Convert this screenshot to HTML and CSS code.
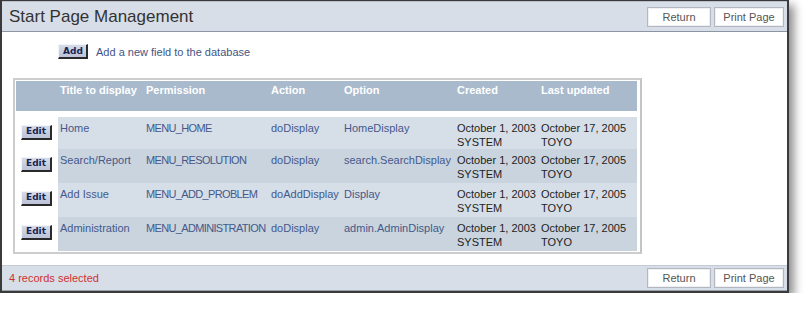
FILE: index.html
```html
<!DOCTYPE html>
<html>
<head>
  <meta charset="utf-8">
  <link rel="stylesheet" href="styles.css">
</head>
<body>
  <div class="window">
    <div class="bar header">
      <div class="title">Start Page Management</div>
      <div class="bar-actions">
        <button class="plain-btn">Return</button>
        <button class="plain-btn print">Print Page</button>
      </div>
    </div>

    <div class="content">
      <div class="add-row">
        <button class="mini-btn add">Add</button>
        <span class="add-text">Add a new field to the database</span>
      </div>

      <div class="frame">
        <table class="grid">
          <colgroup>
            <col style="width: 42px">
            <col style="width: 86px">
            <col style="width: 125px">
            <col style="width: 73px">
            <col style="width: 113px">
            <col style="width: 84px">
            <col>
          </colgroup>
          <thead>
            <tr>
              <th></th>
              <th>Title to display</th>
              <th>Permission</th>
              <th>Action</th>
              <th>Option</th>
              <th>Created</th>
              <th>Last updated</th>
            </tr>
          </thead>
          <tbody>
            <tr class="light">
              <td class="edit-cell"><button class="mini-btn">Edit</button></td>
              <td class="link">Home</td>
              <td class="link caps">MENU_HOME</td>
              <td class="link">doDisplay</td>
              <td class="link">HomeDisplay</td>
              <td>October 1, 2003<br>SYSTEM</td>
              <td>October 17, 2005<br>TOYO</td>
            </tr>
            <tr class="dark">
              <td class="edit-cell"><button class="mini-btn">Edit</button></td>
              <td class="link">Search/Report</td>
              <td class="link caps">MENU_RESOLUTION</td>
              <td class="link">doDisplay</td>
              <td class="link">search.SearchDisplay</td>
              <td>October 1, 2003<br>SYSTEM</td>
              <td>October 17, 2005<br>TOYO</td>
            </tr>
            <tr class="light">
              <td class="edit-cell"><button class="mini-btn">Edit</button></td>
              <td class="link">Add Issue</td>
              <td class="link caps">MENU_ADD_PROBLEM</td>
              <td class="link">doAddDisplay</td>
              <td class="link">Display</td>
              <td>October 1, 2003<br>SYSTEM</td>
              <td>October 17, 2005<br>TOYO</td>
            </tr>
            <tr class="dark">
              <td class="edit-cell"><button class="mini-btn">Edit</button></td>
              <td class="link">Administration</td>
              <td class="link caps">MENU_ADMINISTRATION</td>
              <td class="link">doDisplay</td>
              <td class="link">admin.AdminDisplay</td>
              <td>October 1, 2003<br>SYSTEM</td>
              <td>October 17, 2005<br>TOYO</td>
            </tr>
          </tbody>
        </table>
      </div>
    </div>

    <div class="bar footer">
      <div class="records">4 records selected</div>
      <div class="bar-actions">
        <button class="plain-btn">Return</button>
        <button class="plain-btn print">Print Page</button>
      </div>
    </div>
  </div>
</body>
</html>
```

FILE: styles.css
```css
body {
  margin: 0;
  background: #fff;
  font-family: 'Liberation Sans', Arial, sans-serif;
  font-size: 11px;
}

.window {
  width: 785px;
  border: 2px solid #3a3a3a;
  border-top-width: 1px;
  background: #fff;
  box-shadow: 5px 5px 9px rgba(0, 0, 0, 0.45);
}

.bar {
  display: flex;
  align-items: center;
  justify-content: space-between;
  background: #d7dee8;
  padding: 0 3px 0 7px;
}

.header {
  height: 29px;
  border-top: 1px solid #b8c0cc;
  border-bottom: 1px solid #8b95a3;
}

.footer {
  height: 24px;
  border-top: 1px solid #c3cbd6;
  border-bottom: 1px solid #9aa3b0;
}

.title {
  font-size: 17px;
  color: #333;
}

.bar-actions {
  display: flex;
  gap: 3px;
}

.plain-btn {
  height: 20px;
  width: 64px;
  padding: 0;
  background: #fff;
  border: 1px solid #b3b8c0;
  box-shadow: inset 0 0 0 1px #eef0f3;
  font-family: 'Liberation Sans', Arial, sans-serif;
  font-size: 11px;
  color: #555;
}

.plain-btn.print {
  width: 70px;
}

.records {
  color: #d03030;
  font-size: 11px;
}

.content {
  box-sizing: border-box;
  height: 233px;
  padding: 12px 0 0 11px;
}

.add-row {
  display: flex;
  align-items: center;
  gap: 8px;
  padding-left: 45px;
  margin-bottom: 19px;
}

.add-text {
  color: #3f5585;
}

.mini-btn {
  height: 15px;
  padding: 0 4px;
  background: linear-gradient(#d6dbea, #bcc3d8);
  border: 1px solid #f4f5f8;
  border-right: 2px solid #2a2a2a;
  border-bottom: 2px solid #2a2a2a;
  font-family: 'DejaVu Sans', Arial, sans-serif;
  font-size: 9px;
  font-weight: 700;
  color: #1b2550;
  line-height: 11px;
}

.mini-btn.add {
  width: 30px;
}

.frame {
  width: 623px;
  border: 2px solid #cdcdcd;
  border-right-color: #c4c4c4;
  padding: 1px;
}

.grid {
  width: 621px;
  border-collapse: collapse;
  table-layout: fixed;
}

.grid th {
  height: 33px;
  background: #a9bacd;
  color: #fff;
  font-weight: 700;
  text-align: left;
  vertical-align: top;
  padding: 3px 0 0 2px;
  white-space: nowrap;
  border-bottom: 6px solid #fff;
  box-sizing: border-box;
}

.grid td {
  height: 34px;
  box-sizing: border-box;
  padding: 4px 0 0 2px;
  vertical-align: top;
  line-height: 14px;
  color: #1e1e1e;
  white-space: nowrap;
  overflow: hidden;
}

.grid tr.light td {
  background: #d6dee8;
}

.grid tr.dark td {
  background: #c9d4df;
}

.grid td.link {
  color: #44598a;
}

.grid td.caps {
  letter-spacing: -0.65px;
}

.grid tr td.edit-cell {
  background: #fff;
  padding: 6px 0 0 5px;
}

.edit-cell .mini-btn {
  width: 31px;
}
```
